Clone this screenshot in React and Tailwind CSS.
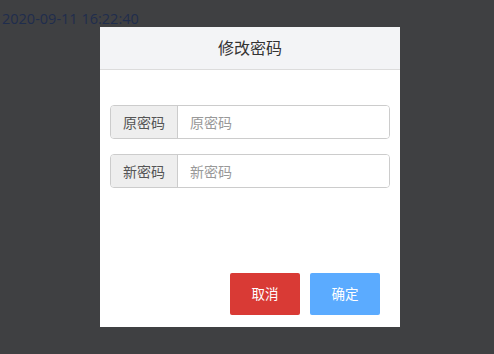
export default function App() {
  return (
    <div
      className="relative w-[494px] h-[354px] bg-[#3f4042] overflow-hidden"
      style={{ fontFamily: '"Open Sans", "Noto Sans CJK SC", sans-serif' }}
    >
      <div className="pl-[2px] pt-[9px] text-[14.5px] leading-[20px] text-[#1f2d4d]">2020-09-11 16:22:40</div>

      {/* modal */}
      <div className="absolute left-[100px] top-[27px] w-[300px] h-[300px] bg-white flex flex-col">
        <div className="h-[43px] bg-[#f3f4f6] border-b border-[#dcdcdc] flex items-center justify-center text-[16px] text-[#333]">
          修改密码
        </div>
        <div className="flex-1 px-[10px] pt-[35px] flex flex-col gap-[15px]">
          {['原密码', '新密码'].map((label) => (
            <div key={label} className="flex h-[34px] rounded-[4px] border border-[#cccccc] overflow-hidden">
              <div className="w-[67px] bg-[#eeeeee] border-r border-[#cccccc] flex items-center justify-center text-[14px] text-[#555]">
                {label}
              </div>
              <input
                placeholder={label}
                className="flex-1 px-[12px] text-[14px] outline-none placeholder:text-[#999] bg-white"
              />
            </div>
          ))}
        </div>
        <div className="flex justify-end gap-[10px] pr-[20px] pb-[12px]">
          <button className="w-[70px] h-[42px] rounded-[2px] bg-[#d93a35] text-white text-[13.5px]">取消</button>
          <button className="w-[70px] h-[42px] rounded-[2px] bg-[#5babff] text-white text-[13.5px]">确定</button>
        </div>
      </div>
    </div>
  )
}
